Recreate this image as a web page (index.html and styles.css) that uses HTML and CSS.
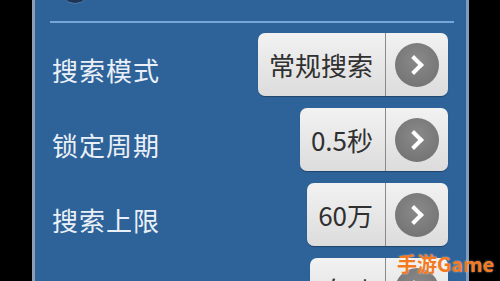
FILE: index.html
```html
<!DOCTYPE html>
<html lang="zh-CN">
<head>
  <meta charset="UTF-8" />
  <meta name="viewport" content="width=device-width, initial-scale=1" />
  <title>搜索设置</title>
  <link rel="stylesheet" href="styles.css">
</head>
<body>

  <div class="panel">
    <div class="title-icon"></div>
    <div class="header-line"></div>

    <div class="row">
      <span class="label">搜索模式</span>
      <div class="picker">
        <span class="value">常规搜索</span>
        <span class="go"><span class="dot"><span class="chev"></span></span></span>
      </div>
    </div>

    <div class="row">
      <span class="label">锁定周期</span>
      <div class="picker">
        <span class="value">0.5秒</span>
        <span class="go"><span class="dot"><span class="chev"></span></span></span>
      </div>
    </div>

    <div class="row">
      <span class="label">搜索上限</span>
      <div class="picker">
        <span class="value">60万</span>
        <span class="go"><span class="dot"><span class="chev"></span></span></span>
      </div>
    </div>

    <div class="row">
      <span class="label">数值类型</span>
      <div class="picker">
        <span class="value">自动</span>
        <span class="go"><span class="dot"><span class="chev"></span></span></span>
      </div>
    </div>
  </div>

  <div class="watermark">手游Game</div>

</body>
</html>
```

FILE: styles.css
```css
body {
  margin: 0;
  background: #000;
  font-family: "Noto Sans CJK SC", "Noto Sans", sans-serif;
  height: 281px;
  overflow: hidden;
}
.panel {
  position: relative;
  margin-left: 32px;
  width: 431px;
  height: 281px;
  background: #2e6399;
  border-left: 3px solid #8d9db2;
  border-right: 3px solid #7f9bbd;
  overflow: hidden;
}
.title-icon {
  position: absolute;
  left: 24px;
  top: -28px;
  width: 30px;
  height: 30px;
  border-radius: 50%;
  background: #1d3556;
  border: 1px solid #4f78a6;
}
.header-line {
  height: 2px;
  margin: 21px 12px 4px 15px;
  background: #76a6d8;
}
.row {
  display: flex;
  align-items: center;
  justify-content: space-between;
  height: 75px;
  padding: 0 18px 0 17px;
}
.label {
  margin-top: 10px;
  font-size: 26px;
  color: #eaf0f7;
  letter-spacing: 1px;
}
.picker {
  display: flex;
  height: 63px;
  border-radius: 7px;
  background: linear-gradient(#f2f2f2, #dcdcdc);
  box-shadow: 0 1px 1px rgb(0 0 0 / 0.3);
}
.value {
  display: flex;
  align-items: center;
  padding: 0 12px 0 11px;
  font-size: 26px;
  color: #303030;
}
.go {
  display: flex;
  align-items: center;
  justify-content: center;
  width: 62px;
  border-left: 1px solid #8a8a8a;
}
.dot {
  position: relative;
  width: 44px;
  height: 44px;
  border-radius: 50%;
  background: radial-gradient(circle at 50% 40%, #8a8a8a, #6e6e6e);
}
.chev {
  position: absolute;
  left: 12px;
  top: 15px;
  width: 10px;
  height: 10px;
  border-top: 4px solid #fff;
  border-right: 4px solid #fff;
  transform: rotate(45deg);
}
.watermark {
  position: absolute;
  left: 397px;
  top: 249px;
  font-size: 20px;
  font-weight: bold;
  color: #f47a22;
  text-shadow: 0 0 2px rgb(255 255 255 / 0.6);
}
```
